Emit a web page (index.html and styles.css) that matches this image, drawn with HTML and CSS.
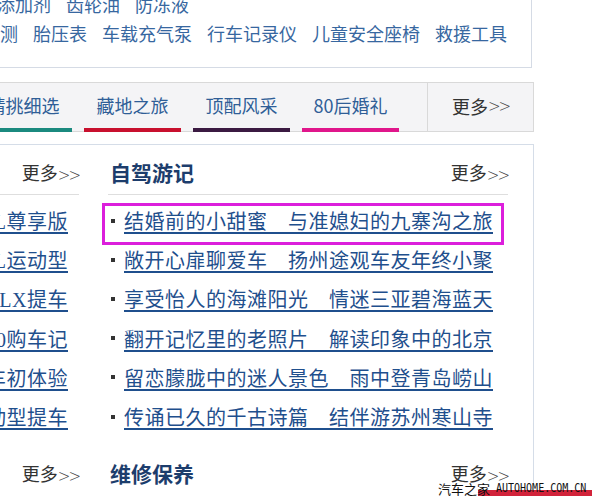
FILE: index.html
```html
<!DOCTYPE html>
<html lang="zh-CN">
<head>
    <meta charset="UTF-8">
    <title>汽车之家 - 自驾游记</title>
    <link rel="stylesheet" href="styles.css">
</head>
<body>

<!-- 用品分类 -->
<div class="top-box">
    <div class="row r1">
        <a href="#">添加剂</a><a href="#">齿轮油</a><a href="#">防冻液</a>
    </div>
    <div class="row r2">
        <a href="#">检测</a><a href="#">胎压表</a><a href="#">车载充气泵</a><a href="#">行车记录仪</a><a href="#">儿童安全座椅</a><a href="#">救援工具</a>
    </div>
</div>

<!-- 专题标签 -->
<div class="tabbar">
    <div class="tabs">
        <a href="#" class="tab t-teal">精挑细选</a>
        <a href="#" class="tab t-red">藏地之旅</a>
        <a href="#" class="tab t-purple">顶配风采</a>
        <a href="#" class="tab t-pink">80后婚礼</a>
    </div>
    <a href="#" class="tab-more">更多<span class="arr">&gt;&gt;</span></a>
</div>

<!-- 文章列表 -->
<div class="content">
    <div class="col col-left">
        <div class="col-head">
            <a href="#" class="more">更多<span class="arr">&gt;&gt;</span></a>
        </div>
        <ul class="list">
            <li><a href="#">旗舰L尊享版</a></li>
            <li><a href="#">豪华L运动型</a></li>
            <li><a href="#">雅阁2.4 DDLX提车</a></li>
            <li><a href="#">途观2.0购车记</a></li>
            <li><a href="#">新车初体验</a></li>
            <li><a href="#">运动型提车</a></li>
        </ul>
        <div class="col-head last">
            <a href="#" class="more">更多<span class="arr">&gt;&gt;</span></a>
        </div>
    </div>

    <div class="col col-main">
        <div class="col-head">
            <h2>自驾游记</h2>
            <a href="#" class="more">更多<span class="arr">&gt;&gt;</span></a>
        </div>
        <ul class="list">
            <li class="hl"><a href="#">结婚前的小甜蜜　与准媳妇的九寨沟之旅</a></li>
            <li><a href="#">敞开心扉聊爱车　扬州途观车友年终小聚</a></li>
            <li><a href="#">享受怡人的海滩阳光　情迷三亚碧海蓝天</a></li>
            <li><a href="#">翻开记忆里的老照片　解读印象中的北京</a></li>
            <li><a href="#">留恋朦胧中的迷人景色　雨中登青岛崂山</a></li>
            <li><a href="#">传诵已久的千古诗篇　结伴游苏州寒山寺</a></li>
        </ul>
        <div class="col-head last">
            <h2>维修保养</h2>
            <a href="#" class="more">更多<span class="arr">&gt;&gt;</span></a>
        </div>
    </div>
</div>

<!-- 水印 -->
<div class="wm">
    <span class="wm-cn">汽车之家</span>
    <span class="wm-bar"></span>
    <span class="wm-en">AUTOHOME.COM.CN</span>
</div>

</body>
</html>
```

FILE: styles.css
```css
html, body {
    margin: 0;
    height: 100%;
    overflow: hidden;
    background: #fff;
}

body {
    font-family: "Noto Sans CJK SC", "Liberation Sans", sans-serif;
    position: relative;
}

a {
    color: inherit;
    text-decoration: none;
}

/* top category box */
.top-box {
    box-sizing: border-box;
    width: 553px;
    margin: -22px 0 0 -21px;
    padding: 11px 0 19px;
    border: 1px solid #d5dbe5;
}

.row {
    display: flex;
    gap: 15px;
    font-size: 18px;
    line-height: 29px;
    color: #3767a0;
    white-space: nowrap;
}

.r1 { margin-left: 17px; }
.r2 { margin-left: 2px; }

/* tab bar */
.tabbar {
    display: flex;
    box-sizing: border-box;
    width: 559px;
    height: 50px;
    margin: 14px 0 0 -25px;
    border-top: 1px solid #d9d9d9;
    border-bottom: 1px solid #d9d9d9;
    border-right: 1px solid #d9d9d9;
    background: #f4f4f6;
}

.tabs {
    display: flex;
    gap: 12px;
    flex: 1;
}

.tab {
    box-sizing: border-box;
    width: 97px;
    margin-bottom: -1px;
    padding-bottom: 2px;
    border-bottom: 4px solid;
    display: flex;
    align-items: center;
    justify-content: center;
    font-size: 18px;
    color: #2f5e97;
    white-space: nowrap;
}

.t-teal { border-bottom-color: #1b8a7f; }
.t-red { border-bottom-color: #c8102e; }
.t-purple { border-bottom-color: #3b1a42; }
.t-pink { border-bottom-color: #e0168b; }

.tab-more {
    box-sizing: border-box;
    width: 106px;
    padding-bottom: 3px;
    border-left: 1px solid #d9d9d9;
    display: flex;
    align-items: center;
    justify-content: center;
    font-size: 18px;
    color: #333;
}

.arr {
    font-family: "DejaVu Sans", sans-serif;
    font-size: 15px;
    font-weight: 300;
    letter-spacing: -2px;
    color: #444;
    transform: scaleY(1.2);
    display: inline-block;
}

/* content */
.content {
    box-sizing: border-box;
    width: 674px;
    height: 420px;
    margin: 12px 0 0 -140px;
    padding-right: 25px;
    border: 1px solid #d5dde8;
    border-bottom: 0;
    display: flex;
    gap: 29px;
}

.col-left { width: 218px; }
.col-main { width: 400px; }

.col-head {
    display: flex;
    justify-content: space-between;
    align-items: center;
    height: 30px;
    margin-top: 12px;
    padding-bottom: 7px;
    border-bottom: 1px solid #dedede;
}

.col-left .col-head { justify-content: flex-end; }

.col-head.last {
    margin-top: 22px;
    border-bottom: 0;
}

.col-head h2 {
    margin: 0;
    padding-left: 2px;
    font-size: 21px;
    font-weight: bold;
    color: #1c3d6c;
}

.more {
    font-size: 18px;
    color: #333;
}

.list {
    list-style: none;
    margin: 0;
    padding: 6px 0 0;
}

.list li {
    display: flex;
    align-items: center;
    height: 39.2px;
    white-space: nowrap;
}

.list a {
    font-family: "Liberation Serif", "Noto Sans CJK SC", serif;
    font-size: 20px;
    letter-spacing: 0.5px;
    color: #1f4f8d;
    text-decoration: underline;
    text-underline-offset: 3px;
}

.col-left .list li {
    justify-content: flex-end;
    padding-right: 11px;
}

.col-main .list li::before {
    content: "";
    flex: none;
    width: 4px;
    height: 4px;
    margin: 0 9px 0 3px;
    background: #333;
}

/* highlighted item */
.hl { position: relative; }

.hl::after {
    content: "";
    position: absolute;
    left: -6px;
    top: 2px;
    width: 402px;
    height: 42px;
    box-sizing: border-box;
    border: 3px solid #dc1fdc;
}

/* watermark */
.wm {
    position: absolute;
    right: 0;
    bottom: 0;
    width: 154px;
    height: 16px;
}

.wm-cn {
    position: absolute;
    left: 0;
    bottom: 0;
    z-index: 1;
    font-size: 13px;
    line-height: 15px;
    color: #111;
}

.wm-bar {
    position: absolute;
    left: 40px;
    right: 0;
    bottom: 0;
    height: 6px;
    background: #d2233a;
}

.wm-en {
    position: absolute;
    left: 58px;
    bottom: 2px;
    font-family: "DejaVu Sans Mono", monospace;
    font-size: 10px;
    line-height: 10px;
    color: #111;
    transform: scaleY(1.25);
    transform-origin: bottom;
}
```
